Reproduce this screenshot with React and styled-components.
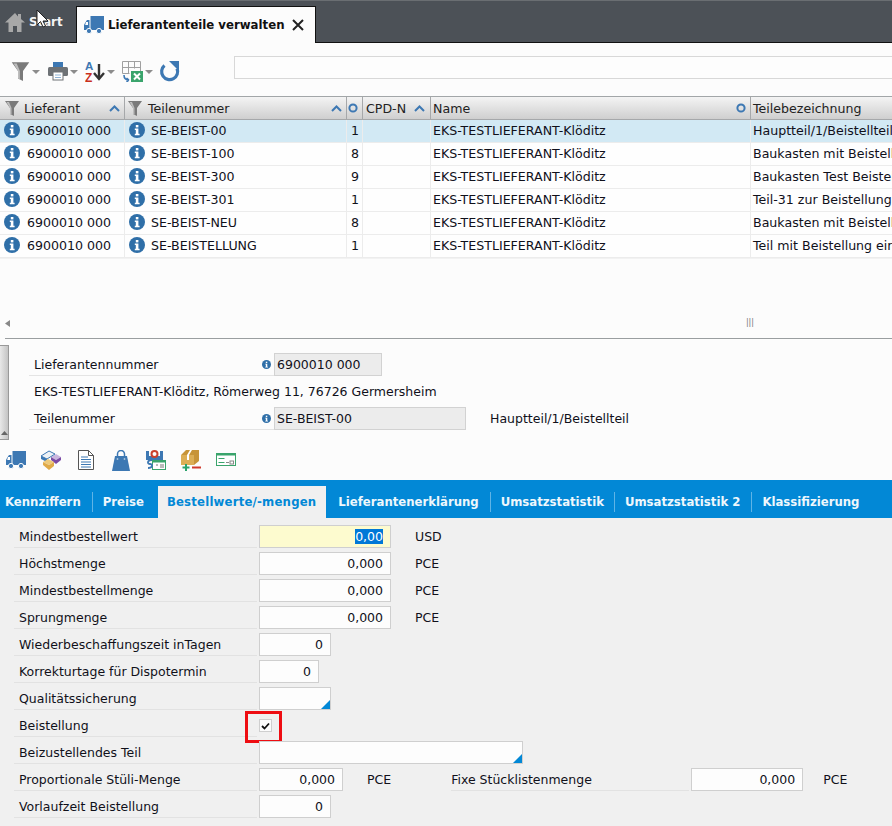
import React from "react";
import styled, { createGlobalStyle } from "styled-components";

const Global = createGlobalStyle`
  html, body { margin: 0; padding: 0; background: #fcfcfc; }
  body { font-family: "DejaVu Sans", Verdana, sans-serif; font-size: 12.5px; color: #10101a; overflow: hidden; }
`;
const Page = styled.div`width: 892px; height: 826px; overflow: hidden; position: relative; display: flex; flex-direction: column;`;
const TabBar = styled.div`height: 43px; flex: none; box-sizing: border-box; background: #4c5157; border-top: 1px solid #6a6e72; border-bottom: 1px solid #111; display: flex; align-items: flex-end; padding-left: 5px;`;
const StartTab = styled.div`width: 71px; height: 36px; display: flex; align-items: center; gap: 4px; color: #f4f4f4; font-weight: 700; font-size: 11.8px; margin-bottom: 2px;`;
const ActiveTab = styled.div`width: 240px; height: 37px; flex: none; box-sizing: border-box; background: #fcfcfc; border: 1px solid #111; border-bottom: none; display: flex; align-items: center; padding-left: 7px; gap: 4px; font-weight: 700; color: #111; font-size: 11.75px; white-space: nowrap; margin-bottom: -1px;`;
const CloseX = styled.span`margin-left: 3px; display: flex;`;
const Toolbar = styled.div`height: 53px; flex: none; display: flex; align-items: center; padding-left: 11px; padding-top: 3px; box-sizing: border-box;`;
const ToolBtn = styled.div`display: flex; align-items: center; gap: 2px; margin-right: ${p => p.$mr}px;`;
const Caret = styled.span`width: 0; height: 0; border-left: 4px solid transparent; border-right: 4px solid transparent; border-top: 4px solid #8c8c8c; margin-top: 2px;`;
const SearchBox = styled.div`position: absolute; left: 234px; top: 56px; right: -4px; height: 23px; box-sizing: border-box; border: 1px solid #d8d8d8; background: #fdfdfd;`;
const GridTable = styled.div`display: grid; grid-template-columns: 125px 222px 16px 68px 320px 160px; grid-auto-rows: 23px; flex: none; border-top: 1px solid #a2a6a8;`;
const HeadCell = styled.div`height: 23px; box-sizing: border-box; background: linear-gradient(#f4f4f4, #cfcfcf); border-right: 1px solid #a6a8aa; border-bottom: 1px solid #a6a8aa; display: flex; align-items: center; padding-left: ${p => p.$pl ?? 2}px; gap: ${p => p.$gap ?? 4}px; white-space: nowrap; overflow: hidden; font-size: 12.6px; color: #222;`;
const Push = styled.span`margin-left: auto; display: flex; margin-right: ${p => p.$mr ?? 4}px;`;
const Cell = styled.div`height: 23px; box-sizing: border-box; background: ${p => p.$sel ? "#d2e9f4" : "#fefefe"}; border-right: 1px solid #ececec; border-bottom: 1px solid #ececec; display: flex; align-items: center; padding: 0 0 2px ${p => p.$pl ?? 2}px; gap: ${p => p.$gap ?? 5}px; white-space: nowrap; overflow: hidden; font-size: 12.6px;`;
const GridBody = styled.div`height: 80px; flex: none; display: flex; align-items: flex-end; justify-content: space-between; padding: 0 138px 11px 5px; box-sizing: border-box; border-top: 1px solid #f2f2f2;`;
const ThumbGrip = styled.span`font-size: 8px; color: #777;`;
const Rule = styled.div`height: 1px; flex: none; margin-left: 5px; background: #9a9ea0;`;
const Detail = styled.div`height: 101px; flex: none; display: flex;`;
const Splitter = styled.div`width: 9px; height: 95px; margin-top: 6px; box-sizing: border-box; background: linear-gradient(90deg, #e8e8e8, #c4c4c4); border: 1px solid #999; border-left: none; display: flex; align-items: flex-end; justify-content: center; padding-bottom: 4px;`;
const DetailBody = styled.div`margin-left: 20px; display: flex; flex-direction: column; padding-top: 12px;`;
const DetailRow = styled.div`height: 27px; display: flex; align-items: center; white-space: nowrap;`;
const DetailLabel = styled.div`width: 245px; height: 25px; align-self: flex-start; box-sizing: border-box; padding: 3px 3px 0 5px; display: flex; align-items: center; justify-content: space-between; border-bottom: 1px solid #e4e4e4;`;
const DetailText = styled.div`padding-left: 5px;`;
const RoField = styled.div`width: ${p => p.$w}px; height: 23px; box-sizing: border-box; background: #ececec; border: 1px solid #d2d2d2; display: flex; align-items: center; padding-left: 2px;`;
const RoText = styled.span`margin-left: 24px;`;
const IconRow = styled.div`height: 40px; flex: none; display: grid; grid-template-columns: repeat(7, 35px); justify-items: center; align-items: center; margin-left: -2px; box-sizing: border-box;`;
const Tabs = styled.div`height: 38px; flex: none; background: #0288d6; display: flex; align-items: flex-end;`;
const Tab = styled.div`height: 32px; padding: 0 ${p => p.$r ?? 11}px 0 ${p => p.$l ?? 11}px; display: flex; align-items: center; font-weight: 700; font-size: 11.7px; white-space: nowrap; letter-spacing: ${p => p.$active ? "0.2px" : "0"}; color: ${p => p.$active ? "#0288d6" : "#eef7fc"}; background: ${p => p.$active ? "#f0f0f0" : "transparent"};`;
const TabSep = styled.span`width: 1px; height: 20px; background: #5fb4e6; align-self: center; margin-top: 6px;`;
const Form = styled.div`flex: 1; background: #f0f0f0; padding-top: 5px; display: flex; flex-direction: column;`;
const FormRow = styled.div`height: 27px; flex: none; display: flex; align-items: center; white-space: nowrap; padding-left: 14px;`;
const FormLabel = styled.div`width: 243px; height: 25px; align-self: flex-start; box-sizing: border-box; padding: 3px 0 0 5px; margin-right: 2px; border-bottom: 1px solid #e2e2e2; display: flex; align-items: center; flex: none;`;
const SecondLabel = styled(FormLabel)`width: 238px; padding-left: 0; margin: 0 2px 0 60px;`;
const Input = styled.div`width: ${p => p.$w}px; height: 23px; flex: none; box-sizing: border-box; background: ${p => p.$hi ? "#fdfbcf" : "#fdfdfd"}; border: 1px solid #cfcfcf; display: flex; align-items: center; justify-content: flex-end; padding-right: 7px; position: relative;`;
const Selected = styled.span`background: #0078d7; color: #fff;`;
const Corner = styled.span`position: absolute; right: 0; bottom: 0; width: 0; height: 0; border-left: 9px solid transparent; border-bottom: 9px solid #0288d6;`;
const Unit = styled.span`margin-left: ${p => p.$ml ?? 24}px;`;
const Check = styled.div`width: 13px; height: 13px; box-sizing: border-box; background: #fcfcfc; border: 1px solid #cfcfcf; display: flex; align-items: center; justify-content: center;`;
const CheckWrap = styled.div`position: relative; display: flex;`;
const RedBox = styled.span`position: absolute; left: -14px; top: -8px; width: 37px; height: 32px; box-sizing: border-box; border: 3px solid #ee0d12;`;
const Cursor = styled.svg`position: absolute; left: 36px; top: 9px;`;

const Info = ({ s = 16 }) => (
  <svg width={s} height={s} viewBox="0 0 16 16" style={{ flex: "none" }}>
    <circle cx="8" cy="8" r="8" fill="#2f6fa8" />
    <rect x="6.8" y="3" width="2.6" height="2.4" fill="#fff" />
    <path d="M5.8 6.6h3.6v5.200h1.200v1.400H5.800v-1.400h1v-3.800h-1z" fill="#fff" />
  </svg>
);
const Funnel = ({ w = 14, h = 16, c = "#7a7a7a" }) => (
  <svg width={w} height={h} viewBox="0 0 14 16" style={{ flex: "none" }}>
    <path d="M0 1h14L9 8v8l-4-2V8z" fill={c} />
    <path d="M6.500 8v6.500L5 14V8L1.500 2H4z" fill="#bdbdbd" />
  </svg>
);
const Up = () => (
  <svg width="11" height="7" viewBox="0 0 11 7"><path d="M1 6l4.500-4.500L10 6" fill="none" stroke="#3d78b3" strokeWidth="2" /></svg>
);
const Ring = () => (
  <svg width="10" height="10" viewBox="0 0 10 10"><circle cx="5" cy="5" r="3.600" fill="none" stroke="#3d78b3" strokeWidth="2" /></svg>
);
const Truck = ({ c = "#3d78b3" }) => (
  <svg width="20" height="20" viewBox="0 0 20 20" style={{ flex: "none" }}>
    <path d="M6.500 1h13.500v14H6.500z" fill={c} />
    <path d="M1 8l2-3h2.500v10H0v-5z" fill={c} />
    <path d="M2 7h2v3H1.200z" fill="#fff" />
    <circle cx="5" cy="16" r="2.600" fill={c} stroke="#fff" /><circle cx="15" cy="16" r="2.600" fill={c} stroke="#fff" />
  </svg>
);
const Home = () => (
  <svg width="20" height="20" viewBox="0 0 20 20" style={{ flex: "none" }}>
    <path d="M10 1L0 10.500h3.500V20h4.500v-6h4v6h4.500V10.500H20L16 7V2h-3v2.500z" fill="#a8a8a8" />
  </svg>
);
const Printer = () => (
  <svg width="20" height="20" viewBox="0 0 20 20">
    <rect x="5" y="1" width="10" height="6" fill="#3d78b3" />
    <rect x="0" y="6" width="20" height="9" rx="1.500" fill="#6e7276" />
    <rect x="5" y="11" width="10" height="8" fill="#fff" stroke="#6e7276" />
    <path d="M7 14h6M7 16.500h6" stroke="#8fb3d6" />
  </svg>
);
const Sort = () => (
  <svg width="20" height="22" viewBox="0 0 20 22">
    <text x="0" y="10" fontSize="11.500" fontWeight="700" fontFamily="Liberation Sans" fill="#3d78b3">A</text>
    <text x="0" y="21.500" fontSize="12" fontWeight="700" fontFamily="Liberation Sans" fill="#c9301c">Z</text>
    <path d="M14 4v14M9 13l5 6 5-6" fill="none" stroke="#333" strokeWidth="2.400" />
  </svg>
);
const Excel = () => (
  <svg width="21" height="21" viewBox="0 0 21 21">
    <path d="M.5.500h18v10M.5.500v12h7M6.500.500v12M12.500.500v7M.5 6.500h18" fill="none" stroke="#a0a0a0" />
    <rect x="9" y="10" width="12" height="11" fill="#3aa46c" />
    <path d="M12 12.500l6 6M18 12.500l-6 6" stroke="#fff" strokeWidth="2" />
    <path d="M2 14c0 4 2 5 5 5M7 19l-2.500-2M7 19l-2.500 2" fill="none" stroke="#3d78b3" strokeWidth="1.600" />
  </svg>
);
const Refresh = () => (
  <svg width="22" height="22" viewBox="0 0 22 22">
    <path d="M6.500 5.500a8 8 0 1 0 12.500 3" fill="none" stroke="#3d78b3" strokeWidth="3.200" />
    <path d="M11 1h10v10z" fill="#3d78b3" />
  </svg>
);
const Boxes = () => (
  <svg width="20" height="20" viewBox="0 0 20 20">
    <path d="M10 7l5-3 5 3-5 3z" fill="#c9b6de" /><path d="M10 7v3l5 4v-4zM15 10v4l5-4V7z" fill="#7b4aa5" />
    <path d="M0 6l8-5 6 3-8 5z" fill="#eef2f6" stroke="#3d78b3" /><path d="M0 6v3l6 3V9z" fill="#3d78b3" />
    <path d="M2 12l5-3 6 3-5 3z" fill="#edc97a" /><path d="M2 12v3l6 5 5-4v-4l-5 3z" fill="#e0aa48" />
  </svg>
);
const Doc = () => (
  <svg width="16" height="20" viewBox="0 0 16 20">
    <path d="M.5.500h10l5 5v14H.5z" fill="#fff" stroke="#555" />
    <path d="M10.500.500v5h5" fill="none" stroke="#555" />
    <path d="M3 7h7M3 9.500h10M3 12h10M3 14.500h10M3 17h10" stroke="#3d78b3" />
  </svg>
);
const Bag = () => (
  <svg width="18" height="21" viewBox="0 0 18 21">
    <path d="M3 6h12l3 15H0z" fill="#3d78b3" />
    <path d="M5.500 9V4a3.500 3.500 0 0 1 7 0v5" fill="none" stroke="#3d78b3" strokeWidth="1.500" />
    <path d="M5.500 8.500v1M12.500 8.500v1" stroke="#fff" strokeWidth="1.500" />
  </svg>
);
const Cash = () => (
  <svg width="20" height="20" viewBox="0 0 20 20">
    <path d="M0 1h3v5h11V1h3v9H0z" fill="#3d78b3" />
    <circle cx="8.500" cy="4" r="3" fill="none" stroke="#c9402c" strokeWidth="2" />
    <rect x="6.500" y="10.500" width="13" height="9" fill="#fff" stroke="#3aa46c" />
    <rect x="6.500" y="10.500" width="13" height="2" fill="#3aa46c" />
    <path d="M10 15h2M14 15h4M14 17h4" stroke="#777" />
    <path d="M6 10c-5 0-5 4-2 4s3 4-2 4" fill="none" stroke="#3d78b3" strokeWidth="1.800" />
  </svg>
);
const BoxPlus = () => (
  <svg width="20" height="21" viewBox="0 0 20 21">
    <path d="M0 5h13v10H0z" fill="#dcae55" /><path d="M13 5l5-5v11l-5 4zM0 5l5-5h13l-5 5z" fill="#c79438" />
    <path d="M6 5h2v5H6zM9 0h2l-3 5H6z" fill="#fff" />
    <path d="M5 14v7M1.500 17.500h7" stroke="#2aa36c" strokeWidth="2" />
    <path d="M11 17.500h9" stroke="#d03a2c" strokeWidth="2" />
  </svg>
);
const Card = () => (
  <svg width="20" height="14" viewBox="0 0 20 14">
    <rect x=".5" y=".5" width="19" height="12" fill="#fff" stroke="#3aa46c" />
    <rect x=".5" y=".5" width="19" height="2" fill="#3aa46c" />
    <path d="M2.500 5.500h6M2.500 9.500h6" stroke="#3aa46c" />
    <path d="M10 9.500h3" stroke="#888" /><rect x="14" y="8" width="3.500" height="3" fill="none" stroke="#888" />
  </svg>
);

const rows = [
  ["SE-BEIST-00", "1", "Hauptteil/1/Beistellteil"],
  ["SE-BEIST-100", "8", "Baukasten mit Beistellung"],
  ["SE-BEIST-300", "9", "Baukasten Test Beistellung"],
  ["SE-BEIST-301", "1", "Teil-31 zur Beistellung"],
  ["SE-BEIST-NEU", "8", "Baukasten mit Beistellung"],
  ["SE-BEISTELLUNG", "1", "Teil mit Beistellung eintragen"],
];
const form = [
  ["Mindestbestellwert", 132, "0,00", "USD", true],
  ["Höchstmenge", 132, "0,000", "PCE"],
  ["Mindestbestellmenge", 132, "0,000", "PCE"],
  ["Sprungmenge", 132, "0,000", "PCE"],
  ["Wiederbeschaffungszeit inTagen", 72, "0"],
  ["Korrekturtage für Dispotermin", 60, "0"],
];

export default function App() {
  return (
    <Page>
      <Global />
      <TabBar>
        <StartTab><Home />Start</StartTab>
        <ActiveTab><Truck />Lieferantenteile verwalten
          <CloseX><svg width="12" height="12" viewBox="0 0 12 12"><path d="M1 1l10 10M11 1L1 11" stroke="#222" strokeWidth="2" /></svg></CloseX>
        </ActiveTab>
      </TabBar>
      <Toolbar>
        <ToolBtn $mr={8}><Funnel w={19} h={20} /><Caret /></ToolBtn>
        <ToolBtn $mr={7}><Printer /><Caret /></ToolBtn>
        <ToolBtn $mr={7}><Sort /><Caret /></ToolBtn>
        <ToolBtn $mr={5}><Excel /><Caret /></ToolBtn>
        <ToolBtn $mr={0}><Refresh /></ToolBtn>
      </Toolbar>
      <SearchBox />
      <GridTable>
        <HeadCell $pl={5} $gap={5}><Funnel />Lieferant<Push><Up /></Push></HeadCell>
        <HeadCell $pl={3} $gap={6}><Funnel />Teilenummer<Push><Up /></Push></HeadCell>
        <HeadCell $pl={1}><Ring /></HeadCell>
        <HeadCell $pl={3}>CPD-N<Push $mr={5}><Up /></Push></HeadCell>
        <HeadCell>Name<Push><Ring /></Push></HeadCell>
        <HeadCell>Teilebezeichnung</HeadCell>
        {rows.map((r, i) => (
          <React.Fragment key={r[0]}>
            <Cell $sel={i === 0} $pl={4} $gap={7}><Info />6900010 000</Cell>
            <Cell $sel={i === 0} $pl={4} $gap={6}><Info />{r[0]}</Cell>
            <Cell $sel={i === 0} $pl={4}>{r[1]}</Cell>
            <Cell $sel={i === 0} />
            <Cell $sel={i === 0}>EKS-TESTLIEFERANT-Klöditz</Cell>
            <Cell $sel={i === 0}>{r[2]}</Cell>
          </React.Fragment>
        ))}
      </GridTable>
      <GridBody>
        <svg width="5" height="7" viewBox="0 0 5 7"><path d="M5 0v7L0 3.500z" fill="#888" /></svg>
        <ThumbGrip>|||</ThumbGrip>
      </GridBody>
      <Rule />
      <Detail>
        <Splitter><svg width="7" height="4" viewBox="0 0 7 4"><path d="M0 4l3.500-4L7 4z" fill="#666" /></svg></Splitter>
        <DetailBody>
          <DetailRow>
            <DetailLabel>Lieferantennummer<Info s={9} /></DetailLabel>
            <RoField $w={108}>6900010 000</RoField>
          </DetailRow>
          <DetailRow><DetailText>EKS-TESTLIEFERANT-Klöditz, Römerweg 11, 76726 Germersheim</DetailText></DetailRow>
          <DetailRow>
            <DetailLabel>Teilenummer<Info s={9} /></DetailLabel>
            <RoField $w={192}>SE-BEIST-00</RoField>
            <RoText>Hauptteil/1/Beistellteil</RoText>
          </DetailRow>
        </DetailBody>
      </Detail>
      <IconRow>
        <Truck /><Boxes /><Doc /><Bag /><Cash /><BoxPlus /><Card />
      </IconRow>
      <Tabs>
        <Tab $l={5}>Kennziffern</Tab><TabSep />
        <Tab $l={10} $r={14}>Preise</Tab>
        <Tab $active $l={9} $r={10}>Bestellwerte/-mengen</Tab>
        <Tab $l={12}>Lieferantenerklärung</Tab><TabSep />
        <Tab $l={10} $r={10}>Umsatzstatistik</Tab><TabSep />
        <Tab $l={10} $r={11}>Umsatzstatistik 2</Tab><TabSep />
        <Tab $l={10}>Klassifizierung</Tab>
      </Tabs>
      <Form>
        {form.map(f => (
          <FormRow key={f[0]}>
            <FormLabel>{f[0]}</FormLabel>
            <Input $w={f[1]} $hi={f[4]}>{f[4] ? <Selected>{f[2]}</Selected> : f[2]}</Input>
            {f[3] && <Unit>{f[3]}</Unit>}
          </FormRow>
        ))}
        <FormRow><FormLabel>Qualitätssicherung</FormLabel><Input $w={72}><Corner /></Input></FormRow>
        <FormRow>
          <FormLabel>Beistellung</FormLabel>
          <CheckWrap>
            <Check><svg width="9" height="8" viewBox="0 0 9 8"><path d="M1 4l2.500 2.500L8 1.500" fill="none" stroke="#111" strokeWidth="1.800" /></svg></Check>
            <RedBox />
          </CheckWrap>
        </FormRow>
        <FormRow><FormLabel>Beizustellendes Teil</FormLabel><Input $w={264}><Corner /></Input></FormRow>
        <FormRow>
          <FormLabel>Proportionale Stüli-Menge</FormLabel>
          <Input $w={84}>0,000</Input>
          <Unit>PCE</Unit>
          <SecondLabel>Fixe Stücklistenmenge</SecondLabel>
          <Input $w={112}>0,000</Input>
          <Unit $ml={20}>PCE</Unit>
        </FormRow>
        <FormRow><FormLabel>Vorlaufzeit Beistellung</FormLabel><Input $w={72}>0</Input></FormRow>
      </Form>
      <Cursor width="14" height="20" viewBox="0 0 14 20"><path d="M1 1v15l3.500-3.500L7 18l2.500-1L7 12h5z" fill="#fff" stroke="#222" /></Cursor>
    </Page>
  );
}
